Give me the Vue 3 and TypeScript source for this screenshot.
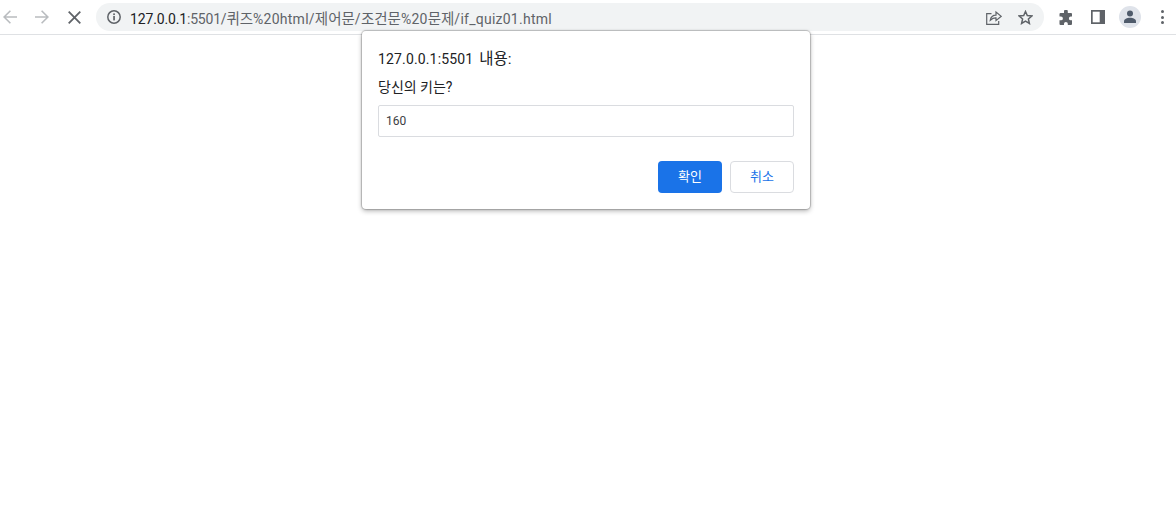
<script setup lang="ts">
const host = '127.0.0.1'
const rest = ':5501/퀴즈%20html/제어문/조건문%20문제/if_quiz01.html'

// Korean runs are wider than the Latin ones in the address bar
const parts = rest.split(/([가-힣]+)/).map((text, i) => ({ text, ko: /[가-힣]/.test(text), port: i === 0 }))
</script>

<template>
  <div class="page">
    <header class="toolbar">
      <button class="nav">
        <svg width="14" height="14" viewBox="0 0 14 14"><path d="M14 7H1.500M7.400 .7 1.100 7l6.300 6.300" fill="none" stroke="#b9bcbf" stroke-width="1.600"/></svg>
      </button>
      <button class="nav forward">
        <svg width="14" height="14" viewBox="0 0 14 14"><path d="M0 7h12.500M6.600 .7 12.900 7l-6.300 6.300" fill="none" stroke="#b9bcbf" stroke-width="1.600"/></svg>
      </button>
      <button class="nav stop">
        <svg width="13" height="13" viewBox="0 0 13 13"><path d="M.7.7l11.600 11.600M12.300.7.700 12.300" fill="none" stroke="#5f6368" stroke-width="1.800"/></svg>
      </button>
      <div class="omnibox">
        <svg class="info" width="14" height="14" viewBox="0 0 14 14">
          <circle cx="7" cy="7" r="6.200" fill="none" stroke="#5f6368" stroke-width="1.500"/>
          <rect x="6.200" y="6" width="1.700" height="4.400" fill="#5f6368"/>
          <rect x="6.200" y="3.400" width="1.700" height="1.700" fill="#5f6368"/>
        </svg>
        <span class="url"><span class="host">{{ host }}</span><span v-for="(part, i) in parts" :key="i" :class="{ ko: part.ko, port: part.port }">{{ part.text }}</span></span>
        <svg class="share" width="16" height="15" viewBox="0 0 16 15">
          <path d="M5.500 3.600H.7v10.700h12V11M4.300 10.200C4.800 7.200 7.300 5.200 10 5.200V2l5.200 4.300L10 10.600V7.900C8 7.800 6 8.700 4.300 10.200Z" fill="none" stroke="#5f6368" stroke-width="1.200"/>
        </svg>
        <svg class="star" width="15" height="15" viewBox="0 0 15 15">
          <path d="M7.500 1.500 9.300 5.600l4.500.4-3.400 3 1 4.400-3.900-2.300-3.900 2.300 1-4.400-3.400-3 4.500-.4Z" fill="none" stroke="#5f6368" stroke-width="1.500"/>
        </svg>
      </div>
      <div class="actions">
        <svg class="puzzle" width="16" height="15" viewBox="0 0 16 15">
          <path d="M6 1.500a1.900 1.900 0 0 1 3.800 0V3H13a1 1 0 0 1 1 1v2.500h-1.200a1.900 1.900 0 0 0 0 3.800H14V14a1 1 0 0 1-1 1H9.800v-1.200a1.900 1.900 0 0 0-3.800 0V15H2.500a1 1 0 0 1-1-1v-3.700H3a1.900 1.900 0 0 0 0-3.800H1.500V4a1 1 0 0 1 1-1H6Z" fill="#5f6368"/>
        </svg>
        <svg class="panel" width="14" height="14" viewBox="0 0 14 14">
          <rect width="14" height="14" fill="#5f6368"/>
          <rect x="1.700" y="1.700" width="7" height="10.600" fill="#fff"/>
        </svg>
        <span class="avatar">
          <svg width="14" height="14" viewBox="0 0 14 14">
            <circle cx="7" cy="3.600" r="3" fill="#4f5b6b"/>
            <path d="M1 13v-1.500C1 9 4 7.800 7 7.800s6 1.200 6 3.700V13Z" fill="#4f5b6b"/>
          </svg>
        </span>
        <span class="menu"><i></i><i></i><i></i></span>
      </div>
    </header>

    <div class="dialog">
      <h1>127.0.0.1:5501<span class="ko">내용:</span></h1>
      <p>당신의 키는?</p>
      <div class="field">160</div>
      <div class="buttons">
        <button class="ok">확인</button>
        <button class="cancel">취소</button>
      </div>
    </div>
  </div>
</template>

<style>
html, body {
  background: #fff;
}
</style>

<style scoped>
.page {
  position: relative;
  height: 521px;
  overflow: hidden;
  font-family: "Roboto", "Noto Sans CJK KR", sans-serif;
}

.toolbar {
  height: 34px;
  display: flex;
  align-items: center;
  border-bottom: 1px solid #dfe1e4;
  padding-left: 3px;
  background: #fff;
}

button {
  font-family: inherit;
}

.nav {
  display: flex;
  padding: 0;
  border: none;
  background: none;
}

.forward {
  margin-left: 18px;
}

.stop {
  margin-left: 19px;
}

.omnibox {
  width: 948px;
  height: 28px;
  margin-left: 15px;
  display: flex;
  align-items: center;
  background: #f1f3f4;
  border-radius: 14px;
  padding-left: 11px;
  padding-right: 11px;
  box-sizing: border-box;
}

.url {
  margin-left: 9px;
  font-size: 14px;
  letter-spacing: 0.25px;
  color: #5f6368;
  white-space: nowrap;
  flex: 1;
}

.url .ko {
  font-size: 14.5px;
  letter-spacing: 0;
}

.url .port {
  letter-spacing: -0.2px;
}

.host {
  color: #202124;
  letter-spacing: -0.15px;
}

.star {
  margin-left: 16px;
}

.actions {
  display: flex;
  align-items: center;
  margin-left: 14px;
}

.panel {
  margin-left: 17px;
}

.avatar {
  width: 22px;
  height: 22px;
  margin-left: 14px;
  border-radius: 50%;
  background: #dfe3ea;
  display: flex;
  align-items: center;
  justify-content: center;
}

.menu {
  margin-left: 20px;
  display: flex;
  flex-direction: column;
  gap: 2.5px;
}

.menu i {
  width: 3px;
  height: 3px;
  border-radius: 50%;
  background: #5f6368;
}

.dialog {
  position: absolute;
  left: 362px;
  top: 31px;
  width: 448px;
  height: 178px;
  box-sizing: border-box;
  padding: 19px 16px 16px;
  background: #fff;
  border-radius: 4px;
  box-shadow: 0 0 1px 1px rgba(0, 0, 0, 0.2), 0 2px 5px rgba(0, 0, 0, 0.3);
  display: flex;
  flex-direction: column;
}

h1 {
  margin: 0;
  font-size: 14px;
  font-weight: 400;
  line-height: 18px;
  letter-spacing: 0.15px;
  color: #202124;
}

h1 .ko {
  font-size: 15.5px;
  letter-spacing: 0;
  margin-left: 6px;
}

p {
  margin: 11px 0 0;
  font-size: 14px;
  line-height: 16px;
  color: #202124;
}

.field {
  margin-top: 10px;
  height: 32px;
  box-sizing: border-box;
  border: 1px solid #dadce0;
  border-radius: 2px;
  padding-left: 7px;
  font-size: 12px;
  line-height: 30px;
  color: #3c4043;
}

.buttons {
  margin-top: auto;
  display: flex;
  justify-content: flex-end;
  gap: 8px;
}

.buttons button {
  width: 64px;
  height: 32px;
  border-radius: 4px;
  font-size: 13px;
  line-height: 29px;
  padding: 0 0 2px;
}

.ok {
  background: #1a73e8;
  border: none;
  color: #fff;
}

.cancel {
  background: #fff;
  border: 1px solid #dadce0;
  color: #1a73e8;
}
</style>
